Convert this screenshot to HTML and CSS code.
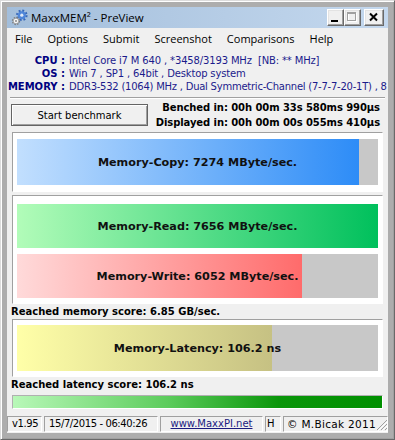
FILE: index.html
```html
<!DOCTYPE html>
<html>
<head>
<meta charset="utf-8">
<title>MaxxMEM² - PreView</title>
<link rel="stylesheet" href="styles.css">
</head>
<body>
<div class="window">
  <div class="titlebar">
    <svg class="app-icon" width="17" height="17" viewBox="0 0 17 17">
      <circle cx="10.8" cy="6.2" r="4.6" fill="none" stroke="#3566b8" stroke-width="2.4" stroke-dasharray="1.8 1.8"/>
      <circle cx="10.8" cy="6.2" r="4" fill="#4f86d9"/>
      <circle cx="10.8" cy="6.2" r="1.6" fill="#dfe9f7"/>
      <circle cx="5" cy="12" r="3.3" fill="none" stroke="#7d7d7d" stroke-width="1.8" stroke-dasharray="1.4 1.2"/>
      <circle cx="5" cy="12" r="2.8" fill="#f6f6f6" stroke="#808080" stroke-width="0.6"/>
      <circle cx="5" cy="12" r="1" fill="#8a8a8a"/>
    </svg>
    <span class="title">MaxxMEM² - PreView</span>
    <div class="caption">
      <span class="cbtn"><svg width="15" height="15" viewBox="0 0 15 15"><rect x="3" y="10" width="7" height="2" fill="#000"/></svg></span>
      <span class="cbtn"><svg width="15" height="15" viewBox="0 0 15 15"><rect x="3.5" y="3.5" width="8" height="8" fill="none" stroke="#fff"/><rect x="2.5" y="2.5" width="8" height="8" fill="none" stroke="#a0a0a0"/><rect x="3" y="3" width="7" height="1" fill="#a0a0a0"/></svg></span>
      <span class="cbtn close"><svg width="18" height="15" viewBox="0 0 18 15"><path d="M5 3.5 L12 10.5 M12 3.5 L5 10.5" stroke="#000" stroke-width="2"/></svg></span>
    </div>
  </div>
  <div class="client">
    <nav class="menubar">
      <span>File</span><span>Options</span><span>Submit</span><span>Screenshot</span><span>Comparisons</span><span>Help</span>
    </nav>
    <div class="sysinfo">
      <div class="info-row"><span class="lbl">CPU :</span><span class="val">Intel Core i7 M 640 , *3458/3193 MHz&nbsp; [NB: ** MHz]</span></div>
      <div class="info-row"><span class="lbl">OS :</span><span class="val">Win 7 , SP1 , 64bit , Desktop system</span></div>
      <div class="info-row"><span class="lbl">MEMORY :</span><span class="val val-mem">DDR3-532 (1064) MHz , Dual Symmetric-Channel (7-7-7-20-1T) , 8</span></div>
    </div>
    <div class="sep"></div>
    <div class="controls">
      <button class="start" type="button">Start benchmark</button>
      <div class="times">
        <div>Benched in: 00h 00m 33s 580ms 990µs</div>
        <div>Displayed in: 00h 00m 00s 055ms 410µs</div>
      </div>
    </div>
    <div class="panel panel-copy">
      <div class="bar tall"><div class="fill copy" style="width:94.7%"></div><span class="bar-label">Memory-Copy: 7274 MByte/sec.</span></div>
    </div>
    <div class="panel panel-rw">
      <div class="bar"><div class="fill read" style="width:100%"></div><span class="bar-label">Memory-Read: 7656 MByte/sec.</span></div>
      <div class="bar"><div class="fill write" style="width:79%"></div><span class="bar-label">Memory-Write: 6052 MByte/sec.</span></div>
    </div>
    <div class="score score-mem">Reached memory score: 6.85 GB/sec.</div>
    <div class="panel panel-lat">
      <div class="bar tall"><div class="fill latency" style="width:70.6%"></div><span class="bar-label">Memory-Latency: 106.2 ns</span></div>
    </div>
    <div class="score score-lat">Reached latency score: 106.2 ns</div>
    <div class="progress"><div class="progress-fill"></div></div>
    <div class="statusbar">
      <span class="sp sp-ver">v1.95</span>
      <span class="sp sp-date">15/7/2015 - 06:40:26</span>
      <span class="sp sp-url"><span class="link">www.MaxxPI.net</span></span>
      <span class="sp sp-h">H</span>
      <span class="sp sp-copy"><span class="copytext">© M.Bicak 2011</span>
        <svg class="grip" width="12" height="12" viewBox="0 0 12 12">
          <path d="M11 1 L1 11 M11 5 L5 11 M11 9 L9 11" stroke="#a0a0a0" stroke-width="1"/>
          <path d="M12 2 L2 12 M12 6 L6 12 M12 10 L10 12" stroke="#fff" stroke-width="1"/>
        </svg>
      </span>
    </div>
  </div>
</div>
</body>
</html>
```

FILE: styles.css
```css
* { box-sizing: border-box; }
html, body { margin: 0; padding: 0; }
body {
  width: 395px;
  height: 440px;
  overflow: hidden;
  background: #b4b4b4;
  font-family: "DejaVu Sans", sans-serif;
  font-size: 10px;
  color: #000;
}
.window {
  width: 395px;
  height: 440px;
  background: #adadad;
  border: 1px solid;
  border-color: #dcdcdc #696969 #696969 #dcdcdc;
  box-shadow: inset 1px 1px 0 #fff, inset -1px -1px 0 #a0a0a0;
  padding: 6px;
  display: flex;
  flex-direction: column;
}
.titlebar {
  height: 21px;
  flex: none;
  display: flex;
  align-items: center;
  background: linear-gradient(to right, #a3bedb, #c4d8ee);
  padding: 0 4px 0 4px;
}
.app-icon { flex: none; }
.title {
  font-family: "Open Sans", sans-serif;
  font-size: 11.5px;
  margin-left: 3px;
  color: #000;
}
.caption { margin-left: auto; display: flex; }
.cbtn {
  width: 17px;
  height: 17px;
  display: flex;
  background: #f0f0f0;
  border: 1px solid;
  border-color: #fff #696969 #696969 #fff;
  box-shadow: inset -1px -1px 0 #a0a0a0, inset 1px 1px 0 #e3e3e3;
}
.cbtn.close { width: 20px; margin-left: 3px; }

.client {
  flex: 1;
  background: #f0f0f0;
  display: flex;
  flex-direction: column;
  overflow: hidden;
  min-height: 0;
}
.menubar {
  height: 20px;
  flex: none;
  display: flex;
  align-items: center;
  gap: 15px;
  padding-left: 8px;
  font-family: "Open Sans", sans-serif;
  font-size: 11px;
}
.sysinfo {
  flex: none;
  padding: 6px 0 4px;
  white-space: nowrap;
}
.info-row { display: flex; height: 13px; line-height: 13px; }
.lbl { flex: none; width: 58px; text-align: right; font-weight: bold; color: #000080; }
.val { margin-left: 4px; color: #1b1b8c; letter-spacing: -0.15px; }
.val-mem { letter-spacing: -0.24px; }
.sep {
  flex: none;
  height: 2px;
  margin: 0 3px;
  border-top: 1px solid #a0a0a0;
  border-bottom: 1px solid #fff;
}
.controls {
  flex: none;
  height: 33px;
  display: flex;
  align-items: flex-start;
}
.start {
  margin: 5px 0 0 4px;
  width: 137px;
  height: 22px;
  padding: 0;
  font-family: "DejaVu Sans", sans-serif;
  font-size: 10px;
  color: #000;
  background: #f0f0f0;
  border: 1px solid #646464;
  box-shadow: inset 1px 1px 0 #fff, inset -1px -1px 0 #a0a0a0;
}
.times {
  margin: 1px 8px 0 auto;
  text-align: right;
  font-weight: bold;
  line-height: 15px;
  white-space: nowrap;
  letter-spacing: -0.08px;
}
.panel {
  flex: none;
  margin: 0 5px;
  background: #fff;
  border: 1px solid;
  border-color: #a0a0a0 #fff #fff #a0a0a0;
  display: flex;
  flex-direction: column;
}
.panel-copy { padding: 6px 4px; }
.panel-rw { margin-top: 3px; padding: 8px 4px 5px; gap: 6px; }
.panel-lat { padding: 5px 4px; }
.bar {
  height: 44px;
  display: grid;
  background: #c8c8c8;
}
.bar.tall { height: 46px; }
.bar > * { grid-area: 1 / 1; }
.fill { height: 100%; justify-self: start; }
.fill.copy { background: linear-gradient(to right, #c2dffe, #2d8cf7); }
.fill.read { background: linear-gradient(to right, #b2fcb9, #00c05c); }
.fill.write { background: linear-gradient(to right, #ffdada, #ff6b6b); }
.fill.latency { background: linear-gradient(to right, #ffffa8, #c6c183); }
.bar-label {
  align-self: center;
  justify-self: center;
  font-weight: bold;
  font-size: 11.2px;
  color: #111;
  white-space: nowrap;
}
.score {
  flex: none;
  padding-left: 4px;
  font-weight: bold;
  white-space: nowrap;
}
.score-mem { height: 15px; line-height: 15px; }
.score-lat { height: 18px; line-height: 16px; }
.progress {
  flex: none;
  height: 14px;
  margin: 0 5px;
  border: 1px solid;
  border-color: #b0b0b0 #fff #fff #b0b0b0;
}
.progress-fill {
  height: 100%;
  background: linear-gradient(to right, #b8f8b8 0%, #5ccc5c 42%, #0a960a 72%, #009000 100%);
}
.statusbar {
  flex: 1;
  display: flex;
  align-items: flex-start;
  gap: 2px;
  padding-top: 7px;
  white-space: nowrap;
}
.sp {
  height: 16px;
  line-height: 14px;
  border: 1px solid;
  border-color: #a0a0a0 #fff #fff #a0a0a0;
  padding: 0 3px;
  overflow: hidden;
  letter-spacing: -0.4px;
}
.sp-ver { width: 35px; padding-left: 4px; }
.sp-date { width: 114px; padding-left: 4px; }
.sp-url { width: 103px; text-align: center; letter-spacing: 0; }
.link { color: #1a1a80; text-decoration: underline; }
.sp-h { width: 16px; padding: 0 1px; }
.sp-copy {
  flex: 1;
  display: flex;
  padding: 0 0 0 3px;
  letter-spacing: 0.3px;
  font-size: 10.5px;
}
.copytext { flex: 1; }
.grip { flex: none; align-self: flex-end; }
```
